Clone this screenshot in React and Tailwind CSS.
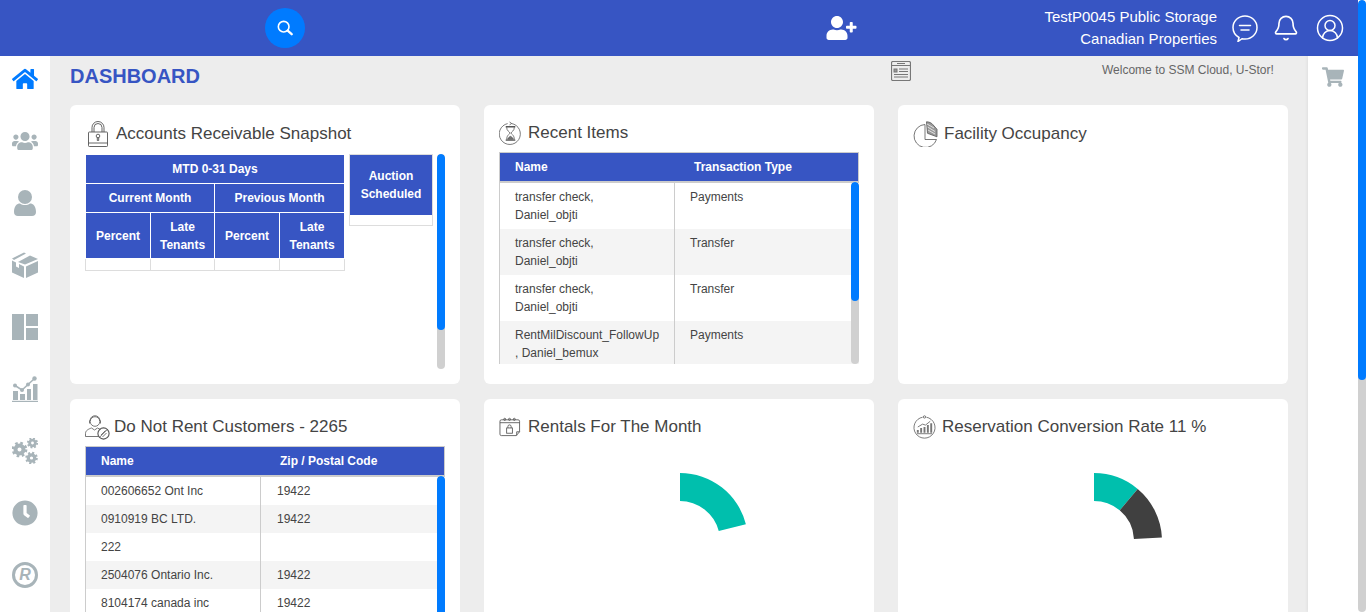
import { FaHome, FaUsers, FaClock, FaShoppingCart, FaUserPlus } from 'react-icons/fa';
import { Bell, CircleUserRound } from 'lucide-react';

const FONT = 'font-["Liberation_Sans",Arial,sans-serif]';

function arcPath(cx, cy, R, r, from, to) {
  const pt = (rad, deg) => {
    const a = (deg * Math.PI) / 180;
    return `${(cx + rad * Math.sin(a)).toFixed(2)} ${(cy - rad * Math.cos(a)).toFixed(2)}`;
  };
  return `M${pt(R, from)} A${R} ${R} 0 0 1 ${pt(R, to)} L${pt(r, to)} A${r} ${r} 0 0 0 ${pt(r, from)} Z`;
}

function PersonIcon() {
  return (
    <svg viewBox="0 0 26 26" className="h-[26px] w-[26px]" fill="#a8b4b9">
      <circle cx="13" cy="7" r="7" />
      <path d="M2 22c0-6 3-8.5 6-8.5 1.500 1 3 1.500 5 1.500s3.500-.5 5-1.500c3 0 6 2.500 6 8.500 0 2.500-1.500 4-4 4H6c-2.500 0-4-1.500-4-4z" />
    </svg>
  );
}

function BoxIcon() {
  return (
    <svg viewBox="0 0 26 26" className="h-[26px] w-[26px]" fill="#a8b4b9">
      <path d="M0 6.500 12 0.500l2 1-12 6.500z" />
      <path d="M6 10 18 3.500l8 3.500-13 5.500z" />
      <path d="M0 8.500l4 2v4l3 1.500v-4l5 2.500V26L0 20.500z" />
      <path d="M14 14.500 26 9v11.500L14 26z" />
    </svg>
  );
}

function PanelsIcon() {
  return (
    <svg viewBox="0 0 26 26" className="h-[26px] w-[26px]" fill="#a8b4b9">
      <rect x="0" y="0" width="12" height="26" />
      <rect x="14" y="0" width="12" height="12" />
      <rect x="14" y="14" width="12" height="12" />
    </svg>
  );
}

function ChartIcon() {
  return (
    <svg viewBox="0 0 26 26" className="h-[26px] w-[26px]" fill="#a8b4b9">
      <rect x="0" y="24.800" width="26" height="1.200" />
      <rect x="1" y="15" width="5" height="9" />
      <rect x="8" y="18" width="5" height="6" />
      <rect x="15" y="13" width="4" height="11" />
      <rect x="21" y="8" width="4.500" height="16" />
      <path d="M3 9.500 10 14 22 3" fill="none" stroke="#a8b4b9" strokeWidth="1.500" />
      <circle cx="3" cy="9.500" r="2" />
      <circle cx="10" cy="14" r="2" />
      <circle cx="16" cy="8.500" r="2" />
      <circle cx="22.500" cy="2.500" r="2.200" />
    </svg>
  );
}

function Gear({ cx, cy, r }) {
  const teeth = (2 * Math.PI * r) / 16;
  return (
    <g fill="none" stroke="#a8b4b9">
      <circle cx={cx} cy={cy} r={r * 0.62} strokeWidth={r * 0.62} />
      <circle cx={cx} cy={cy} r={r} strokeWidth={r * 0.42} strokeDasharray={`${teeth} ${teeth}`} />
    </g>
  );
}

function GearsIcon() {
  return (
    <svg viewBox="0 0 26 26" className="h-[26px] w-[26px]">
      <Gear cx={7.500} cy={11.500} r={6.500} />
      <Gear cx={20.500} cy={5} r={4.600} />
      <Gear cx={19.500} cy={20} r={5.200} />
    </svg>
  );
}

function LockIcon() {
  return (
    <svg viewBox="0 0 20 26" className="h-[26px] w-[20px]" fill="none" stroke="#555" strokeWidth="0.900">
      <path d="M4 11V6.500a6 6 0 0 1 12 0V11M6 11V6.500a4 4 0 0 1 8 0V11" />
      <rect x="0.500" y="11" width="19" height="14.500" rx="0.800" />
      <path d="M0.500 22h19" />
      <circle cx="10" cy="15" r="1.800" />
      <path d="M9.300 16.500v3h1.400v-3" />
    </svg>
  );
}

function HourglassIcon() {
  return (
    <svg viewBox="0 0 24 24" className="h-[24px] w-[23px]" fill="none" stroke="#555" strokeWidth="0.800">
      <path d="M9 2.200a11 11 0 1 0 4 -.1" />
      <path d="M11 0.500l2.200 1.600L11 3.500" />
      <path d="M7 5.500h10M7 19.500h10" strokeWidth="1.400" />
      <path d="M8 6c0 4 3 4.500 3.500 6-.5 1.500-3.500 2-3.500 7M16 6c0 4-3 4.500-3.500 6 .5 1.500 3.500 2 3.500 7" />
      <path d="M9 18.500c1-2 2-2.500 3-3 1 .5 2 1 3 3z" fill="#777" />
    </svg>
  );
}

function PieIcon() {
  return (
    <svg viewBox="0 0 25 26" className="h-[26px] w-[25px]" fill="none" stroke="#555" strokeWidth="0.800">
      <path d="M12 3.500a11.500 11.500 0 1 0 11.500 15H12z" />
      <path d="M13.500 0.800c2.500 0 5 1 6.500 3l4 4.500v7.500l-9.500-3.500z" fill="#999" />
      <path d="M14 3l7 4M14.500 6l7.500 4.500M15 9l7 4" stroke="#fff" strokeWidth="0.700" />
    </svg>
  );
}

function AgentBanIcon() {
  return (
    <svg viewBox="0 0 25 25" className="h-[25px] w-[25px]" fill="none" stroke="#555" strokeWidth="0.800">
      <circle cx="10" cy="6.500" r="4.800" />
      <path d="M5 6c0-7 10-7 10 0M4.500 5.500v3M15.500 5.500v3" />
      <path d="M0.500 21.500v-3c0-3 3-4.500 6-5.500l3 2 3-2 3 1.500" />
      <path d="M0.500 21.500h13" />
      <circle cx="18.500" cy="18.500" r="5.600" strokeWidth="1.100" />
      <path d="M14.800 22l7.400-7.400M16 20l4.500-4.500M17.500 22l4-4" />
    </svg>
  );
}

function CalendarLockIcon() {
  return (
    <svg viewBox="0 0 23 20" className="h-[20px] w-[22px]" fill="none" stroke="#555" strokeWidth="0.900">
      <path d="M21.500 15V4a1.500 1.500 0 0 0-1.500-1.500H2.500A1.500 1.500 0 0 0 1 4v13.500A1.500 1.500 0 0 0 2.500 19H18z" />
      <path d="M1 5.500h20.500" />
      <circle cx="6" cy="2" r="1.100" />
      <circle cx="11" cy="2" r="1.100" />
      <circle cx="16" cy="2" r="1.100" />
      <rect x="8" y="11" width="6" height="5.500" />
      <path d="M9.300 11V9.500a1.700 1.700 0 0 1 3.400 0V11" />
      <path d="M21.500 15H18.500V19" />
    </svg>
  );
}

function GrowthIcon() {
  return (
    <svg viewBox="0 0 24 24" className="h-[24px] w-[23px]" fill="none" stroke="#555" strokeWidth="0.800">
      <path d="M10 1.800a11 11 0 1 0 4 0" />
      <circle cx="12" cy="1.500" r="1.200" />
      <path d="M5 18v-3M8.500 18v-5M12 18v-6M15.500 18v-8M19 18V8" strokeWidth="2" stroke="#777" />
      <path d="M4 19h16" />
      <path d="M5 12l5-3 3 1 5-4" />
    </svg>
  );
}

function ChatIcon() {
  return (
    <svg viewBox="0 0 26 28" className="h-[28px] w-[26px]" fill="none" stroke="#fff" strokeWidth="1.500">
      <path d="M7 23.500C3.500 21.500 1 18 1 13.500 1 7 6.500 2 13 2s12 5 12 11.500S19.500 25 13 25c-1 0-2-.1-3-.3L6 27.500z" />
      <path d="M7.500 11.500h11M9 16h8" strokeLinecap="round" />
    </svg>
  );
}

function SearchIcon() {
  return (
    <svg viewBox="0 0 18 18" className="h-[16px] w-[16px]" fill="none" stroke="#fff">
      <circle cx="7.500" cy="7.500" r="6" strokeWidth="1.800" />
      <path d="M12 12l4.500 4" strokeWidth="2.600" strokeLinecap="round" />
    </svg>
  );
}

function NewsIcon() {
  return (
    <svg viewBox="0 0 20 20" className="h-[20px] w-[20px]" fill="none" stroke="#777" strokeWidth="1">
      <rect x="0.500" y="0.500" width="19" height="19" rx="1.500" strokeWidth="1.200" />
      <path d="M0.500 4.500h19M6 2.500h8" />
      <rect x="3" y="8" width="3" height="3" fill="#999" />
      <path d="M8 8h9M8 10.500h9M3 13.500h14M3 16h14" />
    </svg>
  );
}

function Card({ icon, iconBox, title, pad = 'pt-[13px]', titleGap = 'mb-[4px]', children }) {
  return (
    <div className={`h-[279px] rounded-[6px] bg-white px-[15px] ${pad}`}>
      <div className={`flex h-[30px] items-center ${titleGap}`}>
        <div className={`flex items-center ${iconBox}`}>{icon}</div>
        <h2 className="whitespace-nowrap text-[17px] font-normal text-[#444]">{title}</h2>
      </div>
      {children}
    </div>
  );
}

function Scrollbar({ thumb, className }) {
  return (
    <div className={`w-[8px] overflow-hidden rounded-full bg-[#d0d0d0] ${className}`}>
      <div className={`rounded-full bg-[#007bff] ${thumb}`} />
    </div>
  );
}

function DataTable({ headers, rows, rowHeight, col2Pad, bodyHeight, thumb }) {
  return (
    <div className="relative w-[360px]">
      <div className="flex h-[31px] items-center border border-b-[2px] border-[#ccc] bg-[#3755c3] text-[12px] font-bold text-white">
        <div className="w-[194px] pl-[15px]">{headers[0]}</div>
        <div>{headers[1]}</div>
      </div>
      <div className={`overflow-hidden border-l border-[#ccc] ${bodyHeight}`}>
        {rows.map((row, i) => (
          <div key={i} className={`flex text-[12px] leading-[18px] text-[#444] ${rowHeight} ${i % 2 ? 'bg-[#f4f4f4]' : 'bg-white'}`}>
            <div className="w-[175px] whitespace-pre-line border-r border-[#ccc] pl-[15px] pt-[5px]">{row[0]}</div>
            <div className={`pt-[5px] ${col2Pad}`}>{row[1]}</div>
          </div>
        ))}
      </div>
      <Scrollbar thumb={thumb} className="absolute bottom-0 right-0 top-[30px]" />
    </div>
  );
}

const HEAD = 'border border-white bg-[#3755c3] p-0 text-center text-[12px] font-bold leading-[18px] text-white';
const EMPTY = 'h-[12px] border border-[#ddd] p-0';

function ReceivableTables() {
  return (
    <div className="flex h-[215px] w-[360px] items-start">
      <table className="w-[259px] table-fixed border-collapse">
        <colgroup>
          <col className="w-[65px]" />
          <col className="w-[64px]" />
          <col className="w-[65px]" />
          <col className="w-[65px]" />
        </colgroup>
        <thead>
          <tr className="h-[29px]">
            <th colSpan={4} className={HEAD}>MTD 0-31 Days</th>
          </tr>
          <tr className="h-[29px]">
            <th colSpan={2} className={HEAD}>Current Month</th>
            <th colSpan={2} className={HEAD}>Previous Month</th>
          </tr>
          <tr className="h-[46px]">
            <th className={HEAD}>Percent</th>
            <th className={HEAD}>Late Tenants</th>
            <th className={HEAD}>Percent</th>
            <th className={HEAD}>Late Tenants</th>
          </tr>
        </thead>
        <tbody>
          <tr>
            <td className={EMPTY} />
            <td className={EMPTY} />
            <td className={EMPTY} />
            <td className={EMPTY} />
          </tr>
        </tbody>
      </table>
      <div className="ml-[4px] h-[72px] w-[84px] border border-[#ddd]">
        <div className="flex h-[60px] items-center justify-center bg-[#3755c3] text-center text-[12px] font-bold leading-[18px] text-white">
          Auction<br />Scheduled
        </div>
      </div>
      <Scrollbar thumb="h-[176px]" className="ml-auto h-[215px]" />
    </div>
  );
}

const RECENT = [
  ['transfer check,\nDaniel_objti', 'Payments'],
  ['transfer check,\nDaniel_objti', 'Transfer'],
  ['transfer check,\nDaniel_objti', 'Transfer'],
  ['RentMilDiscount_FollowUp\n, Daniel_bemux', 'Payments'],
];

const DNR = [
  ['002606652 Ont Inc', '19422'],
  ['0910919 BC LTD.', '19422'],
  ['222', ''],
  ['2504076 Ontario Inc.', '19422'],
  ['8104174 canada inc', '19422'],
];

function Donut({ segments }) {
  return (
    <svg viewBox="0 0 360 171" className="h-[171px] w-[360px]">
      {segments.map((s) => (
        <path key={s.color} d={arcPath(181, 95, 68, 40, s.from, s.to)} fill={s.color} />
      ))}
    </svg>
  );
}

const SIDE_ICONS = [
  <FaHome key="home" className="h-[26px] w-[26px] text-[#007bff]" />,
  <FaUsers key="users" className="h-[26px] w-[26px] text-[#a8b4b9]" />,
  <PersonIcon key="person" />,
  <BoxIcon key="box" />,
  <PanelsIcon key="panels" />,
  <ChartIcon key="chart" />,
  <GearsIcon key="gears" />,
  <FaClock key="clock" className="h-[26px] w-[26px] text-[#a8b4b9]" />,
  <div key="reg" className="flex h-[26px] w-[26px] items-center justify-center rounded-full border-[3px] border-[#a8b4b9] text-[16px] font-bold italic leading-none text-[#a8b4b9]">R</div>,
];

export default function App() {
  return (
    <div className={`flex h-[612px] w-[1366px] overflow-hidden bg-white ${FONT}`}>
      <div className="flex w-[1358px] flex-col">
        <header className="flex h-[56px] shrink-0 items-center bg-[#3755c3] text-white">
          <div className="ml-[265px] flex h-[40px] w-[40px] items-center justify-center rounded-full bg-[#007bff]">
            <SearchIcon />
          </div>
          <FaUserPlus className="ml-[521px] h-[24px] w-[31px]" />
          <div className="ml-auto text-right text-[15px] leading-[22px]">
            <div>TestP0045 Public Storage</div>
            <div>Canadian Properties</div>
          </div>
          <div className="ml-[15px] flex items-center">
            <ChatIcon />
          </div>
          <Bell className="ml-[14px] h-[30px] w-[28px]" strokeWidth={1.4} />
          <CircleUserRound className="ml-[15px] mr-[13px] h-[30px] w-[30px]" strokeWidth={1.2} />
        </header>

        <div className="flex min-h-0 flex-1">
          <aside className="flex w-[50px] shrink-0 flex-col items-center gap-[36px] bg-white pt-[10px]">
            {SIDE_ICONS}
          </aside>

          <main className="min-w-0 flex-1 bg-[#ededed] px-[20px]">
            <div className="flex h-[49px]">
              <h1 className="mt-[8px] w-[821px] text-[20px] font-bold leading-[24px] text-[#3755c3]">DASHBOARD</h1>
              <div className="mt-[5px]"><NewsIcon /></div>
              <p className="ml-[191px] mt-[6px] whitespace-nowrap text-[12px] leading-[16px] text-[#666]">Welcome to SSM Cloud, U-Stor!</p>
            </div>

            <div className="grid w-[1218px] grid-cols-3 gap-x-[24px] gap-y-[15px]">
              <Card icon={<LockIcon />} iconBox="w-[31px] pl-[3px]" title="Accounts Receivable Snapshot" pad="pt-[14px]" titleGap="mb-[5px]">
                <ReceivableTables />
              </Card>

              <Card icon={<HourglassIcon />} iconBox="w-[29px]" title="Recent Items">
                <DataTable headers={['Name', 'Transaction Type']} rows={RECENT} rowHeight="h-[46px]" col2Pad="pl-[15px]" bodyHeight="h-[181px]" thumb="h-[119px]" />
              </Card>

              <Card icon={<PieIcon />} iconBox="w-[31px]" title="Facility Occupancy" pad="pt-[14px]" />

              <Card icon={<AgentBanIcon />} iconBox="w-[29px]" title="Do Not Rent Customers - 2265">
                <DataTable headers={['Name', 'Zip / Postal Code']} rows={DNR} rowHeight="h-[28px]" col2Pad="pl-[16px]" bodyHeight="h-[140px]" thumb="h-[300px]" />
              </Card>

              <Card icon={<CalendarLockIcon />} iconBox="w-[29px]" title="Rentals For The Month">
                <Donut segments={[{ color: '#00bfad', from: 0, to: 75.7 }]} />
              </Card>

              <Card icon={<GrowthIcon />} iconBox="w-[29px]" title="Reservation Conversion Rate 11 %">
                <Donut segments={[{ color: '#00bfad', from: 0, to: 40 }, { color: '#404040', from: 40, to: 87 }]} />
              </Card>
            </div>
          </main>

          <aside className="flex w-[50px] shrink-0 justify-center bg-white pt-[11px] shadow-[-1px_0_3px_rgba(0,0,0,0.06)]">
            <FaShoppingCart className="h-[20px] w-[22px] text-[#a8b4b9]" />
          </aside>
        </div>
      </div>

      <Scrollbar thumb="h-[380px]" className="h-[612px] shrink-0" />
    </div>
  );
}
